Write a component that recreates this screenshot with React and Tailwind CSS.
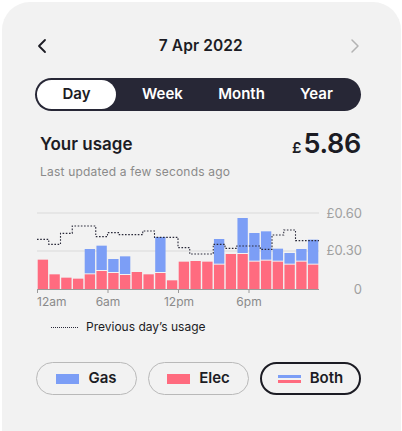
const RED = '#ff6b7f'
const BLUE = '#7c9ef6'

// heights measured per hour (px), elec and total (elec + gas)
const ELEC = [88, 44, 34, 31, 44, 54, 48, 42, 51, 44, 48, 26, 82, 84, 82, 73, 105, 105, 82, 85, 82, 73, 82, 73].map(v => v / 3)
const TOTAL = [0, 0, 0, 0, 120, 130, 90, 98, 0, 0, 156, 0, 0, 0, 0, 150, 0, 213, 168, 173, 121, 108, 120, 148].map(v => v / 3)
const PREV = [118, 133, 100, 78, 78, 110, 98, 104, 104, 93, 112, 112, 143, 162, 162, 133, 145, 138, 138, 148, 105, 90, 122, 122].map(v => v / 3 - 5)

const BASE = 84
const BW = 282 / 24

function prevPath() {
  let d = ''
  PREV.forEach((y, i) => {
    const x0 = i * BW
    const x1 = (i + 1) * BW
    d += i === 0 ? `M${x0} ${y}` : `L${x0} ${y}`
    d += ` L${x1} ${y} `
  })
  return d
}

function Chart() {
  return (
    <svg width="330" height="103" viewBox="0 0 330 103" className="block">
      <line x1="0" y1="8" x2="282" y2="8" stroke="#dadada" strokeWidth="1" />
      <line x1="0" y1="46" x2="282" y2="46" stroke="#dadada" strokeWidth="1" />
      {ELEC.map((h, i) => {
        const x = i * BW + 0.7
        const w = BW - 1.4
        const t = TOTAL[i]
        return (
          <g key={i}>
            {t > 0 && <rect x={x} y={BASE - t} width={w} height={t - h - 1} fill={BLUE} />}
            <rect x={x} y={BASE - h} width={w} height={h} fill={RED} />
          </g>
        )
      })}
      <path d={prevPath()} fill="none" stroke="#2a2a3a" strokeWidth="1.1" strokeDasharray="1.6 1.6" />
      <line x1="0" y1={BASE + 0.5} x2="282" y2={BASE + 0.5} stroke="#9a9a9a" strokeWidth="1" />
      {[0, 70.5, 141, 211.5].map(x => (
        <line key={x} x1={x + 0.5} y1={BASE} x2={x + 0.5} y2={BASE + 4} stroke="#9a9a9a" strokeWidth="1" />
      ))}
      <g fontFamily="Inter, 'Liberation Sans', sans-serif" fontSize="12" fill="#8a8a8a">
        <text x="0" y="101">12am</text>
        <text x="71" y="101" textAnchor="middle">6am</text>
        <text x="142" y="101" textAnchor="middle">12pm</text>
        <text x="212" y="101" textAnchor="middle">6pm</text>
      </g>
      <g fontFamily="Inter, 'Liberation Sans', sans-serif" fontSize="13" fill="#a0a0a0" textAnchor="end">
        <text x="325" y="12.5">£0.60</text>
        <text x="325" y="50">£0.30</text>
        <text x="325" y="88.5">0</text>
      </g>
    </svg>
  )
}

function Toggle({ label, active, swatch }) {
  return (
    <button
      className={`h-[33px] w-[101px] rounded-full flex items-center justify-center gap-[9px] text-[15px] font-semibold text-[#1c1c24] ${
        active ? 'border-[2.5px] border-[#1c1c24]' : 'border border-[#b9b9b9]'
      }`}
    >
      {swatch}
      <span>{label}</span>
    </button>
  )
}

export default function App() {
  const tabs = [
    { label: 'Day', w: 'w-[79px]' },
    { label: 'Week', w: 'w-[93px]' },
    { label: 'Month', w: 'w-[65px]' },
    { label: 'Year', w: 'flex-1' },
  ]

  return (
    <div className="min-h-screen bg-white pt-[2px] px-[1.5px]" style={{ fontFamily: "Inter, 'Liberation Sans', sans-serif" }}>
      <div className="bg-[#f2f2f2] rounded-t-[28px] min-h-[440px] pt-[32px] pl-[33.5px] pr-[39px]">
        <div className="flex items-center justify-between h-[24px]">
          <svg width="14" height="16" viewBox="0 0 14 16" className="ml-[1px]">
            <path d="M9 2 L3 8 L9 14" fill="none" stroke="#1c1c24" strokeWidth="1.8" strokeLinecap="round" strokeLinejoin="round" />
          </svg>
          <div className="text-[15.5px] font-semibold text-[#1c1c24] tracking-[0.1px] ml-[4px]">7 Apr 2022</div>
          <svg width="14" height="16" viewBox="0 0 14 16">
            <path d="M5 2 L11 8 L5 14" fill="none" stroke="#b3b3b3" strokeWidth="1.5" strokeLinecap="round" strokeLinejoin="round" />
          </svg>
        </div>

        <div className="mt-[20px] h-[33px] w-[326px] rounded-full bg-[#272736] p-[2px] flex">
          {tabs.map((t, i) => (
            <div
              key={t.label}
              className={`${t.w} h-[29px] rounded-full flex items-center justify-center text-[15px] font-semibold ${
                i === 0 ? 'bg-white text-[#1c1c24]' : 'text-white'
              }`}
            >
              {t.label}
            </div>
          ))}
        </div>

        <div className="mt-[20px] h-[28px] w-[326px] flex items-center justify-between pl-[5px]">
          <div className="text-[17px] font-semibold text-[#1c1c24]">Your usage</div>
          <div className="flex items-baseline text-[#1c1c24] font-semibold">
            <span className="text-[15px] mr-[2px]">£</span>
            <span className="text-[27px] leading-none tracking-[-0.3px]">5.86</span>
          </div>
        </div>
        <div className="mt-[5px] pl-[5px] text-[12px] leading-[16px] text-[#8a8a8a] tracking-[0.2px]">Last updated a few seconds ago</div>

        <div className="mt-[25px] pl-[1.5px]">
          <Chart />
        </div>

        <div className="mt-[11px] flex items-center h-[16px] pl-[16px]">
          <div className="w-[27px] border-t border-dotted border-[#2a2a3a]" />
          <span className="ml-[8px] text-[12px] text-[#1c1c24]">Previous day’s usage</span>
        </div>

        <div className="mt-[27px] flex gap-[11px] pl-[1px]">
          <Toggle label="Gas" swatch={<span className="w-[23px] h-[10px] bg-[#7c9ef6]" />} />
          <Toggle label="Elec" swatch={<span className="w-[23px] h-[10px] bg-[#ff6b7f]" />} />
          <Toggle
            label="Both"
            active
            swatch={
              <span className="flex flex-col gap-[2px] w-[23px]">
                <span className="h-[3px] bg-[#7c9ef6]" />
                <span className="h-[3px] bg-[#ff6b7f]" />
              </span>
            }
          />
        </div>
      </div>
    </div>
  )
}
